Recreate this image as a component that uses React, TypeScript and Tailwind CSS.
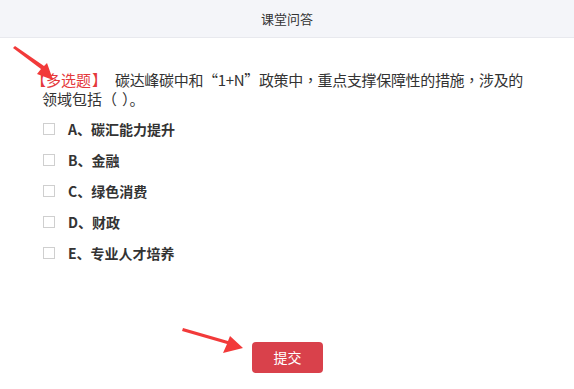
import React from "react";

const options = ["A、碳汇能力提升", "B、金融", "C、绿色消费", "D、财政", "E、专业人才培养"];

const comma = <span style={{ fontFamily: '"Noto Sans CJK TC", sans-serif' }}>，</span>;

export default function App() {
  return (
    <div
      className="relative w-[574px] h-[389px] bg-white overflow-hidden"
      style={{ fontFamily: '"Microsoft YaHei", "Noto Sans CJK SC", sans-serif' }}
    >
      {/* Header */}
      <div className="h-[38px] bg-[#f4f5f9] border-b border-[#e8e9ee] flex items-center justify-center">
        <span className="text-[13px] text-[#333]">课堂问答</span>
      </div>

      {/* Question */}
      <div className="pl-[38px] pr-[20px] pt-[32px]">
        <p className="text-[15px] leading-[19px] text-[#333] whitespace-nowrap">
          <span className="-ml-[7px] text-[#e4393c]">
            【多选题<span className="ml-[1px]">】</span>
          </span>
          <span className="ml-[8px] tracking-[-0.33px]">
            碳达峰碳中和“1+N”政策中{comma}重点支撑保障性的措施{comma}涉及的
          </span>
          <br />
          <span className="ml-[4px]">
            领域包括（<span className="ml-[5px]">）</span>。
          </span>
        </p>

        <ul className="mt-[12px] flex flex-col gap-[13px] pl-[5px]">
          {options.map((o) => (
            <li key={o} className="flex items-center h-[18px]">
              <span className="w-[12px] h-[12px] border border-[#cfcfcf] bg-white" />
              <span className="ml-[13px] text-[14px] font-bold text-[#333]">{o}</span>
            </li>
          ))}
        </ul>
      </div>

      {/* Submit */}
      <div className="absolute left-0 right-0 top-[342px] flex justify-center">
        <button className="ml-[1px] w-[71px] h-[31px] rounded-[4px] bg-[#d9414b] text-white text-[14px]">
          提交
        </button>
      </div>

      {/* Annotation arrows */}
      <svg className="absolute left-0 top-0 pointer-events-none" width="574" height="389">
        <polygon fill="#f23a3a" points="13,48 41,69 37,74 53,80 47,63 44,66 15,46" />
        <polygon fill="#f23a3a" points="182,331 227,344 223,353 243,348 230,336 228,341 183,328" />
      </svg>
    </div>
  );
}
